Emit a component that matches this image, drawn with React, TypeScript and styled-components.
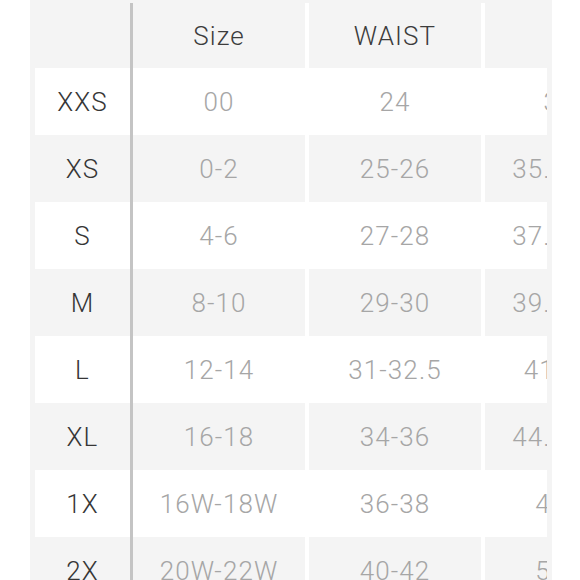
import React from "react";
import styled, { createGlobalStyle } from "styled-components";

const Global = createGlobalStyle`
  html, body { margin: 0; padding: 0; background: #ffffff; }
  body { font-family: Roboto, "Liberation Sans", Arial, sans-serif; }
`;

const Frame = styled.div`
  margin-left: 30px;
  width: 512px;
  height: 580px;
  padding: 0 5px;
  background: #f4f4f4;
`;

const Viewport = styled.div`
  width: 512px;
  height: 580px;
  overflow: hidden;
`;

const Table = styled.div`
  width: 620px;
  display: flex;
  flex-direction: column;
`;

const Row = styled.div<{ $white?: boolean; $head?: boolean }>`
  display: grid;
  grid-template-columns: 95px 3px 172px 176px 175px;
  height: ${(p) => (p.$head ? 68 : 67)}px;
  background: ${(p) => (p.$white ? "#ffffff" : "transparent")};
  ${(p) => (p.$head ? "padding-top: 3px; box-sizing: border-box;" : "")}
`;

const Rule = styled.div`
  background: #c4c4c4;
`;

const Cell = styled.div<{ $kind: "label" | "value" | "head"; $sep?: boolean }>`
  display: flex;
  align-items: center;
  justify-content: center;
  font-size: 26px;
  font-weight: 300;
  letter-spacing: 1.1px;
  line-height: 1;
  white-space: nowrap;
  color: ${(p) =>
    p.$kind === "label" ? "#363636" : p.$kind === "head" ? "#3c3c3c" : "#a6a6a6"};
  ${(p) => (p.$sep ? "border-left: 4px solid #ffffff;" : "")}
`;

const header = ["Size", "WAIST", "HIP"];

const rows: [string, string, string, string][] = [
  ["XXS", "00", "24", "33.5"],
  ["XS", "0-2", "25-26", "35.5-36.5"],
  ["S", "4-6", "27-28", "37.5-38.5"],
  ["M", "8-10", "29-30", "39.5-40.5"],
  ["L", "12-14", "31-32.5", "41-42.5"],
  ["XL", "16-18", "34-36", "44.5-46.5"],
  ["1X", "16W-18W", "36-38", "46-48"],
  ["2X", "20W-22W", "40-42", "50-52"],
];

export default function App() {
  return (
    <>
      <Global />
      <Frame>
        <Viewport>
          <Table>
            <Row $head>
              <Cell $kind="head" />
              <Rule />
              <Cell $kind="head">{header[0]}</Cell>
              <Cell $kind="head" $sep>{header[1]}</Cell>
              <Cell $kind="head" $sep>{header[2]}</Cell>
            </Row>
            {rows.map((r, i) => (
              <Row key={r[0]} $white={i % 2 === 0}>
                <Cell $kind="label">{r[0]}</Cell>
                <Rule />
                <Cell $kind="value">{r[1]}</Cell>
                <Cell $kind="value" $sep>{r[2]}</Cell>
                <Cell $kind="value" $sep>{r[3]}</Cell>
              </Row>
            ))}
          </Table>
        </Viewport>
      </Frame>
    </>
  );
}
